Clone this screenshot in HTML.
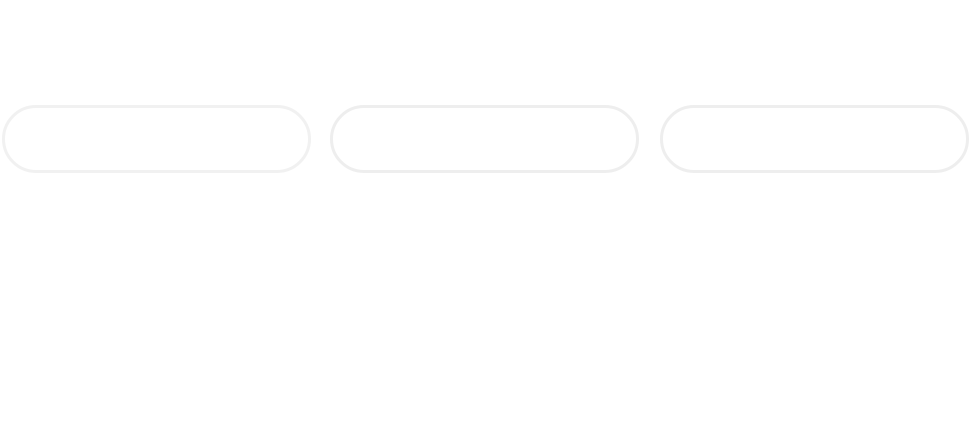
<!DOCTYPE html>
<html><head><style>
html,body{margin:0;padding:0;background:#fff;width:969px;height:444px;overflow:hidden}
.p{position:absolute;top:105px;width:303px;height:62px;border:3px solid #f1f1f1;border-radius:34px;background:#fff}
</style></head><body>
<div class="p" style="left:2px"></div>
<div class="p" style="left:330px;border-color:#eeeeee"></div>
<div class="p" style="left:660px;border-color:#eeeeee"></div>
</body></html>
